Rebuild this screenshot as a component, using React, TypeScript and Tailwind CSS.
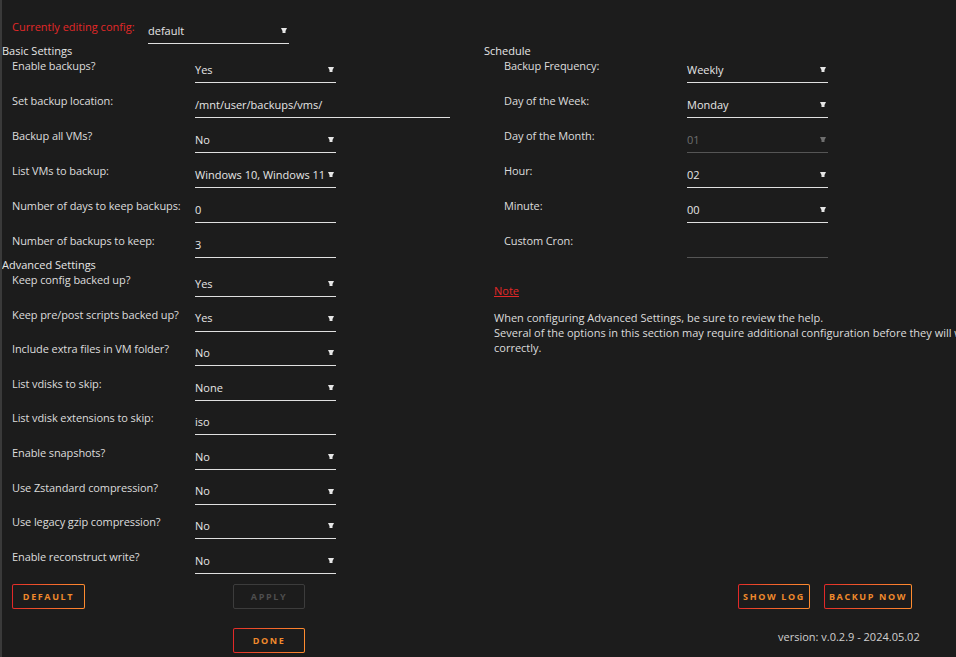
import React from "react";

type Field =
  | { label: string; kind: "select"; value: string; disabled?: boolean }
  | { label: string; kind: "input"; value: string; wide?: boolean };

const basicSettings: Field[] = [
  { label: "Enable backups?", kind: "select", value: "Yes" },
  { label: "Set backup location:", kind: "input", value: "/mnt/user/backups/vms/", wide: true },
  { label: "Backup all VMs?", kind: "select", value: "No" },
  { label: "List VMs to backup:", kind: "select", value: "Windows 10, Windows 11" },
  { label: "Number of days to keep backups:", kind: "input", value: "0" },
  { label: "Number of backups to keep:", kind: "input", value: "3" },
];

const advancedSettings: Field[] = [
  { label: "Keep config backed up?", kind: "select", value: "Yes" },
  { label: "Keep pre/post scripts backed up?", kind: "select", value: "Yes" },
  { label: "Include extra files in VM folder?", kind: "select", value: "No" },
  { label: "List vdisks to skip:", kind: "select", value: "None" },
  { label: "List vdisk extensions to skip:", kind: "input", value: "iso" },
  { label: "Enable snapshots?", kind: "select", value: "No" },
  { label: "Use Zstandard compression?", kind: "select", value: "No" },
  { label: "Use legacy gzip compression?", kind: "select", value: "No" },
  { label: "Enable reconstruct write?", kind: "select", value: "No" },
];

const schedule: Field[] = [
  { label: "Backup Frequency:", kind: "select", value: "Weekly" },
  { label: "Day of the Week:", kind: "select", value: "Monday" },
  { label: "Day of the Month:", kind: "select", value: "01", disabled: true },
  { label: "Hour:", kind: "select", value: "02" },
  { label: "Minute:", kind: "select", value: "00" },
  { label: "Custom Cron:", kind: "input", value: "" },
];

const Arrow = ({ muted }: { muted?: boolean }) => (
  <svg width="6" height="6" viewBox="0 0 6 6" className={muted ? "text-[#6f6f6f]" : "text-[#e6e6e6]"}>
    <path d="M0 0H6L4.5 3V5H1.5V3Z" fill="currentColor" />
  </svg>
);

const Control = ({ field }: { field: Field }) => {
  if (field.kind === "select") {
    const muted = field.disabled;
    return (
      <div
        className={`w-[141px] h-[25px] flex items-center justify-between pr-[2px] border-b ${
          muted ? "border-[#555] text-[#6f6f6f]" : "border-[#e0e0e0] text-[#e6e6e6]"
        }`}
      >
        <span className="whitespace-nowrap">{field.value}</span>
        <Arrow muted={muted} />
      </div>
    );
  }
  const empty = field.value === "";
  return (
    <div
      className={`${field.wide ? "w-[255px]" : "w-[141px]"} h-[25px] flex items-center border-b ${
        empty ? "border-[#555]" : "border-[#e0e0e0]"
      } text-[#e6e6e6]`}
    >
      {field.value}
    </div>
  );
};

const Row = ({ field }: { field: Field }) => (
  <div className="flex items-start">
    <div className="w-[183px] shrink-0 leading-4 text-[#dcdcdc] whitespace-nowrap tracking-[-0.1px]">
      {field.label}
    </div>
    <Control field={field} />
  </div>
);

const Button = ({ children, disabled, width }: { children: React.ReactNode; disabled?: boolean; width: string }) =>
  disabled ? (
    <div className={`${width} h-[25px] rounded-[2px] border border-[#3c3c3c] flex items-center justify-center text-[9px] font-bold tracking-[0.18em] text-[#4e4e4e]`}>
      {children}
    </div>
  ) : (
    <div className={`${width} h-[25px] rounded-[2px] p-px bg-linear-to-r from-[#e22828] to-[#ff8c2f]`}>
      <div className="w-full h-full rounded-[1px] bg-[#1c1c1c] flex items-center justify-center text-[9px] font-bold tracking-[0.18em] text-[#f08a2c]">
        {children}
      </div>
    </div>
  );

export default function App() {
  return (
    <div className="w-[956px] h-[657px] overflow-hidden bg-[#1c1c1c] border-l-2 border-[#3a3a3a] font-['Open_Sans',sans-serif] text-[11px] text-[#e6e6e6]">
      {/* config picker */}
      <div className="flex items-start pt-[19px] pl-[10px]">
        <div className="w-[136px] leading-4 text-[#e22828]">Currently editing config:</div>
        <Control field={{ label: "", kind: "select", value: "default" }} />
      </div>

      <div className="flex">
        {/* left column */}
        <div className="w-[482px] shrink-0">
          <div className="leading-[14px]">Basic Settings</div>
          <div className="pl-[10px] flex flex-col gap-[10px]">
            {basicSettings.map((f) => (
              <Row key={f.label} field={f} />
            ))}
          </div>
          <div className="leading-[14px]">Advanced Settings</div>
          <div className="pl-[10px] flex flex-col gap-[9.6px]">
            {advancedSettings.map((f) => (
              <Row key={f.label} field={f} />
            ))}
          </div>
        </div>

        {/* right column */}
        <div className="w-[540px] shrink-0">
          <div className="leading-[14px]">Schedule</div>
          <div className="pl-5 flex flex-col gap-[10px]">
            {schedule.map((f) => (
              <Row key={f.label} field={f} />
            ))}
          </div>
          <div className="pl-[10px] mt-[25px]">
            <div className="leading-4 text-[#e22828] underline">Note</div>
            <div className="mt-[11px] leading-[15px] text-[#dcdcdc] whitespace-nowrap">
              When configuring Advanced Settings, be sure to review the help.
              <br />
              Several of the options in this section may require additional configuration before they will work
              <br />
              correctly.
            </div>
          </div>
        </div>
      </div>

      {/* actions */}
      <div className="flex items-center mt-[10px]">
        <div className="w-[482px] shrink-0 flex pl-[10px]">
          <Button width="w-[73px]">DEFAULT</Button>
          <div className="ml-[148px]">
            <Button width="w-[72px]" disabled>
              APPLY
            </Button>
          </div>
        </div>
        <div className="flex gap-[14px] ml-[254px]">
          <Button width="w-[72px]">SHOW LOG</Button>
          <Button width="w-[88px]">BACKUP NOW</Button>
        </div>
      </div>
      <div className="flex items-center mt-[19px]">
        <div className="w-[482px] shrink-0 pl-[231px]">
          <Button width="w-[72px]">DONE</Button>
        </div>
        <div className="ml-[294px] -mt-[6px] whitespace-nowrap text-[#d0d0d0]">version: v.0.2.9 - 2024.05.02</div>
      </div>
    </div>
  );
}
